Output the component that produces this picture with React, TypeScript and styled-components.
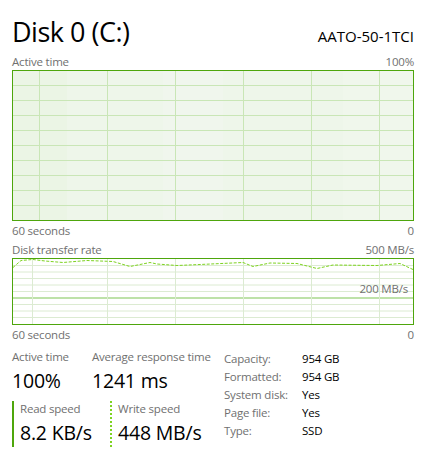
import styled, { createGlobalStyle } from "styled-components";

const GlobalStyle = createGlobalStyle`
  html, body {
    margin: 0;
    padding: 0;
    background: #ffffff;
  }
  body {
    font-family: "Open Sans", "Noto Sans", sans-serif;
  }
`;

const Page = styled.div`
  width: 422px;
  height: 466px;
  box-sizing: border-box;
  padding: 14px 8px 0 12px;
  background: #ffffff;
  display: flex;
  flex-direction: column;
`;

const Header = styled.div`
  display: flex;
  justify-content: space-between;
  align-items: baseline;
  height: 40px;
`;

const Title = styled.div`
  font-size: 27px;
  font-weight: 400;
  color: #000000;
  line-height: 36px;
  letter-spacing: -0.5px;
`;

const Model = styled.div`
  font-size: 15px;
  color: #000000;
  letter-spacing: 0;
`;

const LabelRow = styled.div<{ $mt?: number }>`
  display: flex;
  justify-content: space-between;
  font-size: 11.5px;
  line-height: 16px;
  color: #707070;
  margin-top: ${(p) => p.$mt ?? 0}px;
  letter-spacing: -0.2px;
`;

const ChartBox = styled.div<{ $h: number }>`
  position: relative;
  height: ${(p) => p.$h}px;
  border: 1px solid #4ea60c;
  background: #ffffff;
  svg {
    display: block;
    width: 100%;
    height: 100%;
  }
`;

const ChartTag = styled.div`
  position: absolute;
  right: 5px;
  top: 22px;
  font-size: 11.5px;
  color: #707070;
  letter-spacing: -0.2px;
`;

const Stats = styled.div`
  display: flex;
  margin-top: 6px;
`;

const LeftStats = styled.div`
  width: 212px;
  display: flex;
  flex-direction: column;
`;

const StatRow = styled.div<{ $mt?: number }>`
  display: flex;
  margin-top: ${(p) => p.$mt ?? 0}px;
`;

const Stat = styled.div<{ $w: number; $bar?: "solid" | "dotted" }>`
  width: ${(p) => p.$w}px;
  box-sizing: border-box;
  padding-left: ${(p) => (p.$bar ? 6 : 0)}px;
  border-left: ${(p) =>
    p.$bar === "solid"
      ? "2px solid #4ea60c"
      : p.$bar === "dotted"
      ? "2px dotted #7ed321"
      : "none"};
`;

const StatLabel = styled.div`
  font-size: 11.5px;
  line-height: 16px;
  color: #707070;
  letter-spacing: -0.2px;
  white-space: nowrap;
`;

const StatValue = styled.div`
  font-size: 19.5px;
  line-height: 28px;
  padding-top: 2px;
  color: #000000;
  letter-spacing: -0.2px;
  white-space: nowrap;
`;

const InfoTable = styled.div`
  display: grid;
  grid-template-columns: 78px auto;
  grid-auto-rows: 18px;
  align-items: center;
  font-size: 11.5px;
  letter-spacing: -0.2px;
`;

const InfoKey = styled.div`
  color: #707070;
`;

const InfoVal = styled.div`
  color: #000000;
`;

const v1 = [26, 94, 162, 230, 298, 366];
const v2 = [19, 94, 162, 230, 298, 366];

function ActiveChart() {
  const rows = Array.from({ length: 9 }, (_, i) => 14.5 + i * 15);
  return (
    <svg viewBox="0 0 400 149" preserveAspectRatio="none">
      <rect x="0" y="0" width="400" height="149" fill="#eef6ea" />
      <rect x="0" y="0" width="54" height="149" fill="#ebf5e5" />
      <rect x="150" y="0" width="60" height="149" fill="#f0f6ed" />
      <rect x="330" y="0" width="70" height="149" fill="#f0f7ec" />
      {rows.map((y) => (
        <line key={y} x1="0" x2="400" y1={y} y2={y} stroke="#c9e6b6" strokeWidth="1" />
      ))}
      {v1.map((x) => (
        <line key={x} x1={x + 0.5} x2={x + 0.5} y1="0" y2="149" stroke="#c9e6b6" strokeWidth="1" />
      ))}
    </svg>
  );
}

function TransferChart() {
  const rows = Array.from({ length: 9 }, (_, i) => 6.5 + i * 6.5);
  const pts = [
    [0, 8], [8, 1], [20, 0], [32, 1.5], [50, 3], [74, 1], [100, 2], [117, 7],
    [137, 3], [144, 4.5], [164, 6], [187, 5], [230, 3], [240, 7], [257, 3.5],
    [284, 4], [304, 9], [320, 5.5], [364, 6], [387, 4], [400, 10],
  ];
  const d = pts.map((p, i) => `${i === 0 ? "M" : "L"}${p[0]},${p[1] + 0.5}`).join(" ");
  return (
    <svg viewBox="0 0 400 65" preserveAspectRatio="none">
      {rows.map((y, i) => (
        <line
          key={y}
          x1="0"
          x2="400"
          y1={y}
          y2={y}
          stroke={i === 5 ? "#a9d98c" : "#dcebd2"}
          strokeWidth={i === 5 ? 1.5 : 1}
        />
      ))}
      {v2.map((x) => (
        <line key={x} x1={x + 0.5} x2={x + 0.5} y1="0" y2="65" stroke="#dcebd2" strokeWidth="1" />
      ))}
      <path d={d} fill="none" stroke="#7ed321" strokeWidth="1" strokeDasharray="3 1.5" />
    </svg>
  );
}

export default function App() {
  return (
    <>
      <GlobalStyle />
      <Page>
        <Header>
          <Title>Disk 0 (C:)</Title>
          <Model>AATO-50-1TCI</Model>
        </Header>
        <LabelRow>
          <span>Active time</span>
          <span>100%</span>
        </LabelRow>
        <ChartBox $h={149}>
          <ActiveChart />
        </ChartBox>
        <LabelRow $mt={2}>
          <span>60 seconds</span>
          <span>0</span>
        </LabelRow>
        <LabelRow $mt={3}>
          <span>Disk transfer rate</span>
          <span>500 MB/s</span>
        </LabelRow>
        <ChartBox $h={65}>
          <TransferChart />
          <ChartTag>200 MB/s</ChartTag>
        </ChartBox>
        <LabelRow $mt={2}>
          <span>60 seconds</span>
          <span>0</span>
        </LabelRow>
        <Stats>
          <LeftStats>
            <StatRow>
              <Stat $w={80}>
                <StatLabel>Active time</StatLabel>
                <StatValue>100%</StatValue>
              </Stat>
              <Stat $w={130}>
                <StatLabel>Average response time</StatLabel>
                <StatValue>1241 ms</StatValue>
              </Stat>
            </StatRow>
            <StatRow $mt={6}>
              <Stat $w={98} $bar="solid">
                <StatLabel>Read speed</StatLabel>
                <StatValue>8.2 KB/s</StatValue>
              </Stat>
              <Stat $w={110} $bar="dotted">
                <StatLabel>Write speed</StatLabel>
                <StatValue>448 MB/s</StatValue>
              </Stat>
            </StatRow>
          </LeftStats>
          <InfoTable>
            <InfoKey>Capacity:</InfoKey>
            <InfoVal>954 GB</InfoVal>
            <InfoKey>Formatted:</InfoKey>
            <InfoVal>954 GB</InfoVal>
            <InfoKey>System disk:</InfoKey>
            <InfoVal>Yes</InfoVal>
            <InfoKey>Page file:</InfoKey>
            <InfoVal>Yes</InfoVal>
            <InfoKey>Type:</InfoKey>
            <InfoVal>SSD</InfoVal>
          </InfoTable>
        </Stats>
      </Page>
    </>
  );
}
